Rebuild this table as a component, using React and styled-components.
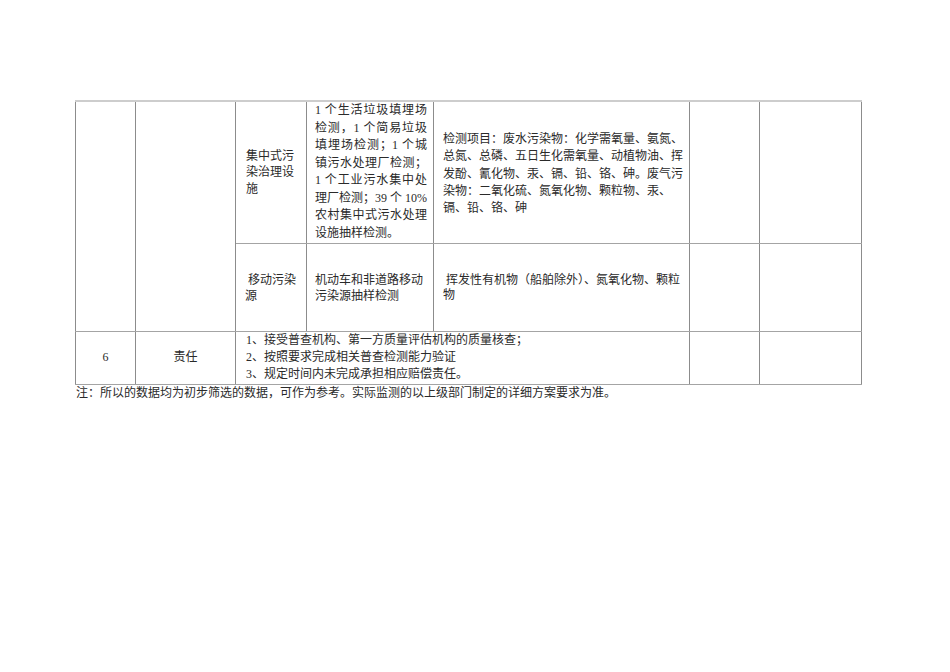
import React from "react";
import styled, { createGlobalStyle } from "styled-components";

const GlobalStyle = createGlobalStyle`
  html, body {
    margin: 0;
    padding: 0;
    background: #ffffff;
  }
  body {
    font-family: "Liberation Serif", "Noto Sans CJK SC", serif;
    color: #2a2a2a;
  }
`;

const Page = styled.div`
  width: 950px;
  height: 672px;
  box-sizing: border-box;
  padding: 100px 0 0 75px;
  background: #fff;
`;

const Table = styled.table`
  border-collapse: collapse;
  table-layout: fixed;
  width: 786px;
  font-size: 12px;
`;

const Row = styled.tr`
  height: ${(p) => p.$h}px;
`;

const Cell = styled.td`
  border-left: 1px solid #8c8c8c;
  border-right: 1px solid #8c8c8c;
  border-top: ${(p) => (p.$first ? "2px solid #cdcdcd" : "1px solid #a4a4a4")};
  border-bottom: 1px solid #a4a4a4;
  padding: ${(p) => p.$pad || "0 8px 0 9px"};
  vertical-align: ${(p) => p.$valign || "middle"};
  text-align: ${(p) => p.$align || "left"};
  line-height: ${(p) => p.$lh || 17}px;
  white-space: nowrap;
`;

const Line = styled.span`
  display: block;
  text-align: ${(p) => (p.$fill ? "justify" : "left")};
  text-align-last: ${(p) => (p.$fill ? "justify" : "left")};
  text-indent: ${(p) => (p.$indent ? "3px" : "0")};
`;

const Note = styled.div`
  font-size: 12px;
  line-height: 17px;
  padding-left: 1px;
`;

const widths = [60, 100, 71, 127, 256, 70, 102];

const lines = (arr, fillAll) =>
  arr.map((t, i) => (
    <Line key={i} $fill={fillAll ? i < arr.length - 1 : false}>
      {t}
    </Line>
  ));

export default function App() {
  return (
    <>
      <GlobalStyle />
      <Page>
        <Table>
          <colgroup>
            {widths.map((w, i) => (
              <col key={i} style={{ width: w }} />
            ))}
          </colgroup>
          <tbody>
            <Row $h={142}>
              <Cell $first rowSpan={2} />
              <Cell $first rowSpan={2} />
              <Cell $first $pad="0 8px 0 10px" $lh={16.5}>
                {lines(["集中式污", "染治理设", "施"], false)}
              </Cell>
              <Cell $first $pad="0 6px 0 8px" $valign="top" $lh={17.5}>
                {lines(
                  [
                    "1 个生活垃圾填埋场",
                    "检测，1 个简易垃圾",
                    "填埋场检测；1 个城",
                    "镇污水处理厂检测；",
                    "1 个工业污水集中处",
                    "理厂检测；39 个 10%",
                    "农村集中式污水处理",
                    "设施抽样检测。",
                  ],
                  true
                )}
              </Cell>
              <Cell $first $pad="4px 7px 0 9px" $lh={17.2}>
                {lines(
                  [
                    "检测项目：废水污染物：化学需氧量、氨氮、",
                    "总氮、总磷、五日生化需氧量、动植物油、挥",
                    "发酚、氰化物、汞、镉、铅、铬、砷。废气污",
                    "染物：二氧化硫、氮氧化物、颗粒物、汞、",
                    "镉、铅、铬、砷",
                  ],
                  false
                )}
              </Cell>
              <Cell $first />
              <Cell $first />
            </Row>
            <Row $h={88}>
              <Cell $pad="2px 8px 0 9px" $lh={16}>
                <Line $indent>移动污染</Line>
                <Line>源</Line>
              </Cell>
              <Cell $pad="2px 6px 0 8px" $lh={16}>
                <Line>机动车和非道路移动</Line>
                <Line>污染源抽样检测</Line>
              </Cell>
              <Cell $pad="2px 7px 0 9px" $lh={15.5}>
                <Line $indent>挥发性有机物（船舶除外）、氮氧化物、颗粒</Line>
                <Line>物</Line>
              </Cell>
              <Cell />
              <Cell />
            </Row>
            <Row $h={53}>
              <Cell $align="center" $pad="0">
                6
              </Cell>
              <Cell $align="center" $pad="0">
                责任
              </Cell>
              <Cell colSpan={3} $pad="0 8px 0 10px" $lh={17}>
                <Line>1、接受普查机构、第一方质量评估机构的质量核查；</Line>
                <Line>2、按照要求完成相关普查检测能力验证</Line>
                <Line>3、规定时间内未完成承担相应赔偿责任。</Line>
              </Cell>
              <Cell />
              <Cell />
            </Row>
          </tbody>
        </Table>
        <Note>
          注：所以的数据均为初步筛选的数据，可作为参考。实际监测的以上级部门制定的详细方案要求为准。
        </Note>
      </Page>
    </>
  );
}
